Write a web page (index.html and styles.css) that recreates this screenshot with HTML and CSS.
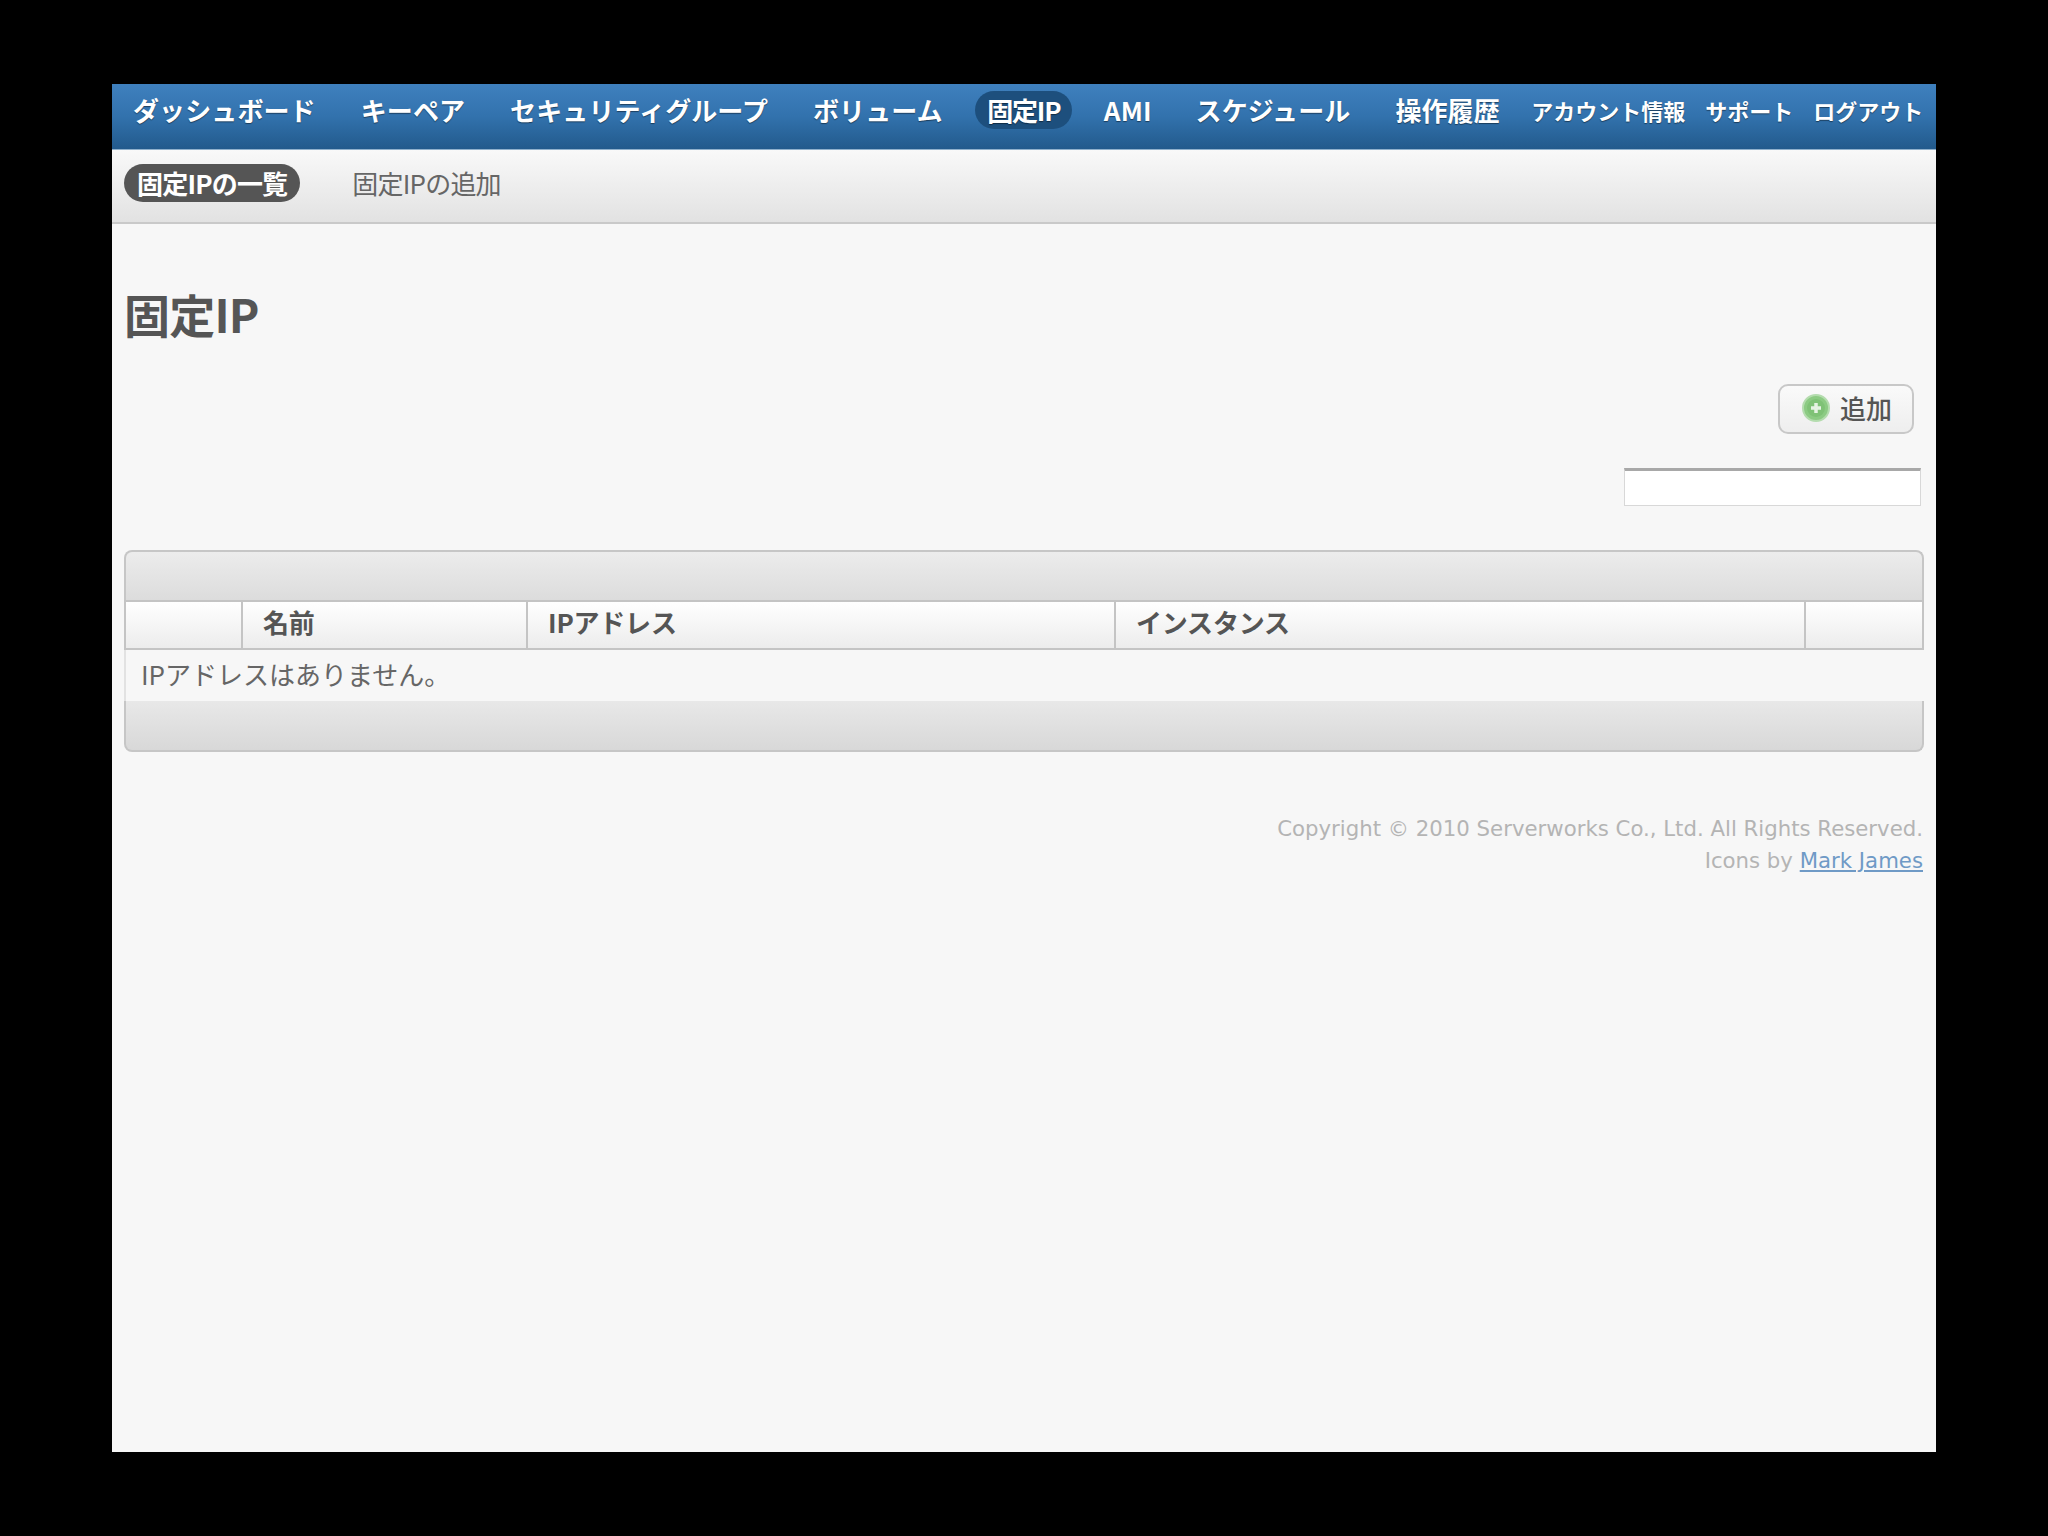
FILE: index.html
```html
<!DOCTYPE html>
<html lang="ja">
<head>
<meta charset="utf-8">
<title>固定IP</title>
<link rel="stylesheet" href="styles.css">
</head>
<body>
<div class="app">
  <nav class="nav">
    <a class="nav-item" href="#">ダッシュボード</a>
    <a class="nav-item" href="#">キーペア</a>
    <a class="nav-item" href="#">セキュリティグループ</a>
    <a class="nav-item" href="#">ボリューム</a>
    <a class="nav-item active" href="#">固定IP</a>
    <a class="nav-item tight" href="#">AMI</a>
    <a class="nav-item" href="#">スケジュール</a>
    <a class="nav-item" href="#">操作履歴</a>
    <a class="nav-small first" href="#">アカウント情報</a>
    <a class="nav-small" href="#">サポート</a>
    <a class="nav-small" href="#">ログアウト</a>
  </nav>
  <div class="subnav">
    <a class="sub-item current" href="#">固定IPの一覧</a>
    <a class="sub-item" href="#">固定IPの追加</a>
  </div>
  <main class="content">
    <h1 class="title">固定IP</h1>
    <div class="actions">
      <button class="add-button" type="button">
        <svg class="add-icon" viewBox="0 0 28 28" aria-hidden="true">
          <circle cx="14" cy="14" r="13" fill="#8ccb83" stroke="#b4dcae" stroke-width="2"/>
          <circle cx="14" cy="14" r="9" fill="#7fc276"/>
          <path d="M14 9v10M9 14h10" stroke="#e6f3e3" stroke-width="3.5"/>
        </svg>
        <span>追加</span>
      </button>
    </div>
    <div class="search"><input class="search-input" type="text"></div>
    <div class="panel">
      <div class="panel-bar"></div>
      <table class="grid">
        <colgroup>
          <col class="c1"><col class="c2"><col class="c3"><col class="c4"><col class="c5">
        </colgroup>
        <thead>
          <tr><th></th><th>名前</th><th>IPアドレス</th><th>インスタンス</th><th></th></tr>
        </thead>
        <tbody>
          <tr><td colspan="5">IPアドレスはありません。</td></tr>
        </tbody>
      </table>
      <div class="panel-bar bottom"></div>
    </div>
    <footer class="footer">
      <p>Copyright © 2010 Serverworks Co., Ltd. All Rights Reserved.</p>
      <p>Icons by <a href="#">Mark James</a></p>
    </footer>
  </main>
</div>
</body>
</html>
```

FILE: styles.css
```css
* { box-sizing: border-box; }
html, body { margin: 0; padding: 0; height: 100%; }
body {
  background: #000;
  padding: 84px 112px;
  font-family: "Noto Sans CJK JP", "DejaVu Sans", sans-serif;
  color: #555;
}
.app {
  height: 1368px;
  background: #f7f7f7;
  display: flex;
  flex-direction: column;
}
.nav {
  height: 66px;
  flex: none;
  display: flex;
  align-items: center;
  padding: 0 0 13px 8px;
  background: linear-gradient(#3f80be, #3272ad 50%, #225a8c);
  border-bottom: 1px solid #8fb0cc;
}
.nav-item, .nav-small {
  color: #fff;
  text-decoration: none;
  font-weight: 700;
  white-space: nowrap;
  text-shadow: 0 1px 1px rgba(0, 0, 0, .45);
}
.nav-item {
  font-size: 26px;
  line-height: 38px;
  padding: 0 13px;
  margin: 0 9.5px;
  border-radius: 19px;
  letter-spacing: .1px;
}
.nav-item:first-child { margin-left: 0; }
.nav-item.active {
  background: #1d4f7d;
  padding: 0 12px;
  margin: 0 9px 0 10px;
  letter-spacing: -1.2px;
}
.nav-item.tight { margin-right: 8.5px; }
.nav-small {
  font-size: 22px;
  line-height: 38px;
  padding: 0 10px;
}
.nav-small.first { margin-left: -1px; }
.subnav {
  height: 74px;
  flex: none;
  display: flex;
  align-items: center;
  gap: 52px;
  padding: 0 0 7px 12px;
  background: linear-gradient(#f9f9f9, #e2e2e2);
  border-bottom: 2px solid #c9c9c9;
}
.sub-item {
  font-size: 26px;
  line-height: 38px;
  color: #666;
  text-decoration: none;
  white-space: nowrap;
  letter-spacing: -.8px;
}
.sub-item.current {
  color: #fff;
  font-weight: 700;
  background: #555;
  border-radius: 19px;
  padding: 0 13px;
}
.content {
  flex: 1;
  padding: 0 12px;
}
.title {
  margin: 56px 0 0;
  font-size: 46px;
  line-height: 66px;
  font-weight: 700;
  color: #555;
  letter-spacing: -.8px;
}
.actions {
  display: flex;
  justify-content: flex-end;
  margin-top: 38px;
  padding-right: 10px;
}
.add-button {
  width: 136px;
  height: 50px;
  display: flex;
  align-items: center;
  gap: 10px;
  padding: 0 0 2px 22px;
  border: 2px solid #c8c8c8;
  border-radius: 10px;
  background: linear-gradient(#fafafa, #eeeeee);
  color: #555;
  font: 500 26px/1 "Noto Sans CJK JP", sans-serif;
}
.add-icon { width: 28px; height: 28px; flex: none; }
.search {
  display: flex;
  justify-content: flex-end;
  margin-top: 34px;
  padding-right: 3px;
}
.search-input {
  width: 297px;
  height: 38px;
  padding: 0;
  background: #fff;
  border: 1px solid #d8d8d8;
  border-top: 3px solid #a8a8a8;
  border-radius: 0;
  outline: none;
}
.panel {
  margin-top: 44px;
  width: 1800px;
}
.panel-bar {
  height: 50px;
  background: linear-gradient(#ececec, #dcdcdc);
  border: 2px solid #c6c6c6;
  border-bottom: 0;
  border-radius: 8px 8px 0 0;
}
.panel-bar.bottom {
  height: 51px;
  background: linear-gradient(#e8e8e8, #d8d8d8);
  border: 2px solid #c6c6c6;
  border-top: 0;
  border-radius: 0 0 8px 8px;
}
.grid {
  width: 100%;
  border-collapse: separate;
  border-spacing: 0;
  table-layout: fixed;
}
.c1 { width: 119px; }
.c2 { width: 285px; }
.c3 { width: 588px; }
.c4 { width: 690px; }
.c5 { width: auto; }
.grid th {
  height: 50px;
  padding: 0 0 7px 20px;
  text-align: left;
  font-size: 26px;
  font-weight: 700;
  color: #555;
  background: linear-gradient(#ffffff, #ececec);
  border: solid #c4c4c4;
  border-width: 2px 2px 2px 0;
  letter-spacing: -.2px;
}
.grid th:first-child { border-left-width: 2px; }
.grid td {
  height: 51px;
  padding: 0 0 4px 15px;
  font-size: 26px;
  color: #666;
  background: #f7f7f7;
  border-left: 2px solid #e2e2e2;
}
.footer {
  margin-top: 60.5px;
  width: 1799px;
  text-align: right;
  font-family: "DejaVu Sans", sans-serif;
  font-size: 21.25px;
  line-height: 32.5px;
  color: #b4b4b4;
}
.footer p { margin: 0; }
.footer a { color: #6f9ac6; }
```
